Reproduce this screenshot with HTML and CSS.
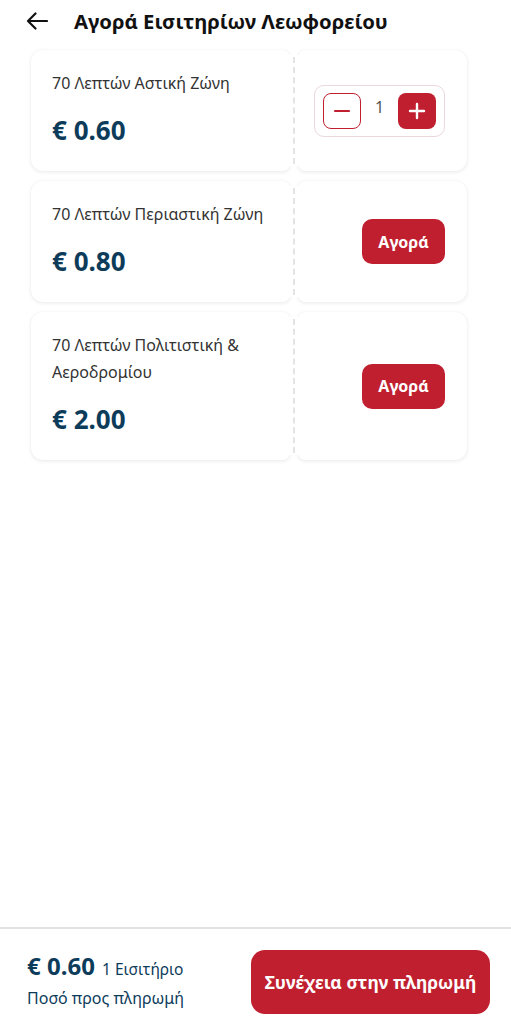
FILE: index.html
```html
<!DOCTYPE html>
<html lang="el">
<head>
<meta charset="utf-8">
<title>Αγορά Εισιτηρίων Λεωφορείου</title>
<link rel="stylesheet" href="styles.css">
</head>
<body>
<div class="app">
  <header class="topbar">
    <button class="back" aria-label="Πίσω">
      <svg width="22" height="18" viewBox="0 0 22 18"><path d="M21 9H2M9.5 1.5L2 9l7.5 7.5" fill="none" stroke="#111" stroke-width="2.2" stroke-linecap="round" stroke-linejoin="round"/></svg>
    </button>
    <h1 class="title">Αγορά Εισιτηρίων Λεωφορείου</h1>
  </header>

  <main class="list">
    <div class="ticket">
      <div class="t-left">
        <div class="t-name">70 Λεπτών Αστική Ζώνη</div>
        <div class="t-price">€ 0.60</div>
      </div>
      <div class="t-sep"></div>
      <div class="t-right">
        <div class="stepper">
          <button class="st-btn st-minus" aria-label="Μείωση">
            <svg width="18" height="18" viewBox="0 0 18 18"><path d="M2 9h14" stroke="#c01f2f" stroke-width="2.2" stroke-linecap="round"/></svg>
          </button>
          <span class="st-val">1</span>
          <button class="st-btn st-plus" aria-label="Αύξηση">
            <svg width="18" height="18" viewBox="0 0 18 18"><path d="M2 9h14M9 2v14" stroke="#fff" stroke-width="2.4" stroke-linecap="round"/></svg>
          </button>
        </div>
      </div>
    </div>

    <div class="ticket">
      <div class="t-left">
        <div class="t-name">70 Λεπτών Περιαστική Ζώνη</div>
        <div class="t-price">€ 0.80</div>
      </div>
      <div class="t-sep"></div>
      <div class="t-right">
        <button class="buy">Αγορά</button>
      </div>
    </div>

    <div class="ticket">
      <div class="t-left">
        <div class="t-name">70 Λεπτών Πολιτιστική &amp;<br>Αεροδρομίου</div>
        <div class="t-price">€ 2.00</div>
      </div>
      <div class="t-sep"></div>
      <div class="t-right">
        <button class="buy">Αγορά</button>
      </div>
    </div>
  </main>

  <footer class="bottombar">
    <div class="sum">
      <div class="sum-line"><span class="sum-price">€ 0.60</span> <span class="sum-count">1 Εισιτήριο</span></div>
      <div class="sum-label">Ποσό προς πληρωμή</div>
    </div>
    <button class="pay">Συνέχεια στην πληρωμή</button>
  </footer>
</div>
</body>
</html>
```

FILE: styles.css
```css
* { box-sizing: border-box; }
html, body { margin: 0; padding: 0; background: #fff; }
body {
  font-family: "Noto Sans", "DejaVu Sans", sans-serif;
  color: #333;
}
button { font-family: inherit; border: none; cursor: pointer; padding: 0; }

.app {
  display: flex;
  flex-direction: column;
  height: 1024px;
}

.topbar {
  display: flex;
  align-items: center;
  height: 42px;
  padding: 0 0 0 26px;
}
.back {
  background: none;
  width: 22px;
  height: 18px;
  display: flex;
  margin-right: 26px;
}
.title {
  margin: 0;
  font-size: 20.3px;
  font-weight: 700;
  color: #111;
}

.list {
  flex: 1;
  display: flex;
  flex-direction: column;
  gap: 10px;
  padding: 8px 0 0 31px;
}

.ticket {
  display: flex;
  width: 436px;
}
.t-left, .t-right {
  background: #fff;
  box-shadow: 0 1px 4px rgba(0, 0, 0, 0.09), 0 0 1px rgba(0, 0, 0, 0.05);
}
.t-left {
  width: 259px;
  border-radius: 12px 7px 7px 12px;
  padding: 20px 8px 26px 21px;
  display: flex;
  flex-direction: column;
  gap: 18px;
}
.t-right {
  flex: 1;
  border-radius: 7px 12px 12px 7px;
  display: flex;
  align-items: center;
  justify-content: flex-end;
  padding-right: 22px;
}
.t-sep {
  width: 10px;
  margin: 5px -1px;
  background: #fff;
  display: flex;
  justify-content: center;
  position: relative;
  z-index: 1;
}
.t-sep::before {
  content: "";
  width: 0;
  margin: 2px 0;
  border-left: 2px dashed #e4e4e4;
}

.t-name {
  font-size: 16px;
  line-height: 27px;
  color: #333;
}
.t-price {
  font-size: 26px;
  line-height: 30px;
  font-weight: 700;
  color: #0d3c5b;
}

.stepper {
  display: flex;
  align-items: center;
  width: 131px;
  height: 52px;
  border: 1px solid #ead8db;
  border-radius: 10px;
  padding: 0 8px;
}
.st-btn {
  width: 38px;
  height: 36px;
  border-radius: 8px;
  display: flex;
  align-items: center;
  justify-content: center;
}
.st-minus {
  background: #fff;
  border: 1.5px solid #c01f2f;
}
.st-plus {
  background: #c01f2f;
}
.st-val {
  width: 37px;
  text-align: center;
  font-size: 16px;
  color: #555;
  margin-top: -8px;
}

.buy {
  width: 83px;
  height: 45px;
  border-radius: 10px;
  background: #c01f2f;
  color: #fff;
  font-size: 16px;
  font-weight: 700;
}

.bottombar {
  height: 97px;
  border-top: 2px solid #e2e2e2;
  display: flex;
  align-items: flex-start;
  justify-content: space-between;
  padding: 21px 21px 0 27px;
}
.sum {
  padding-top: 2px;
}
.sum-line {
  line-height: 28px;
  white-space: nowrap;
}
.sum-price {
  font-size: 24px;
  font-weight: 700;
  color: #0d3c5b;
}
.sum-count {
  font-size: 15.5px;
  color: #0d3c5b;
  margin-left: 3px;
}
.sum-label {
  font-size: 16px;
  line-height: 24px;
  color: #0d3c5b;
  margin-top: 3px;
}
.pay {
  width: 239px;
  height: 64px;
  border-radius: 14px;
  background: #c01f2f;
  color: #fff;
  font-size: 17.5px;
  font-weight: 700;
}
```
